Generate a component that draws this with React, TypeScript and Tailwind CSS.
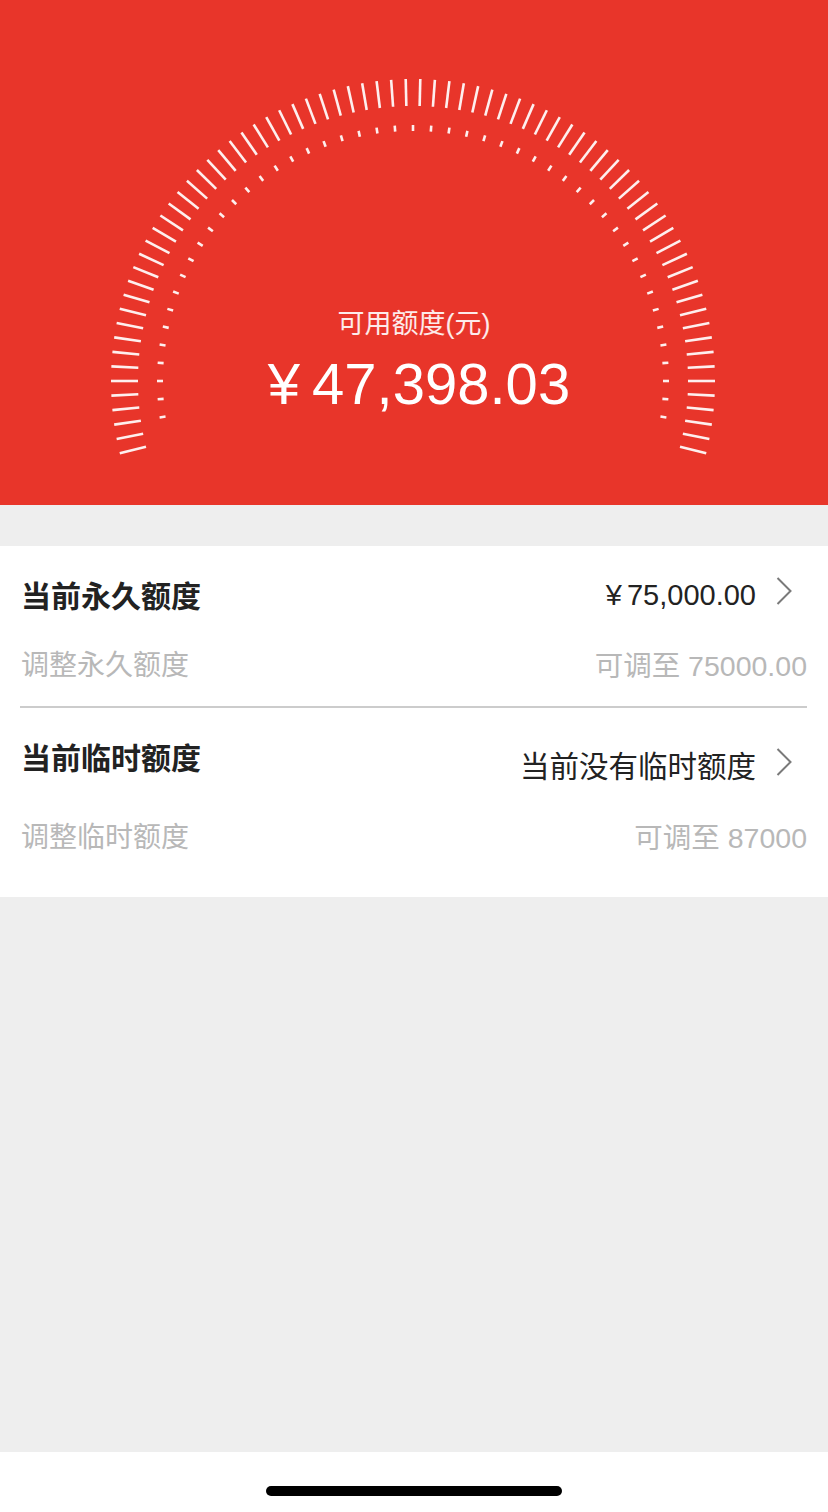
import React from 'react';

const CX = 413;
const CY = 381;

// outer scale: 76 ticks, 65 steps across the top half, 5 more below each side
const ticks = Array.from({ length: 76 }, (_, i) => {
  const step = 180 / 65;
  const a = ((180 + 5 * step - i * step) * Math.PI) / 180;
  return {
    x1: CX + 275 * Math.cos(a),
    y1: CY - 275 * Math.sin(a),
    x2: CX + 302 * Math.cos(a),
    y2: CY - 302 * Math.sin(a),
  };
});

// inner dotted ring
const dots = Array.from({ length: 49 }, (_, i) => {
  const step = 180 / 44;
  const a = ((180 + 2 * step - i * step) * Math.PI) / 180;
  return {
    x1: CX + 250 * Math.cos(a),
    y1: CY - 250 * Math.sin(a),
    x2: CX + 256 * Math.cos(a),
    y2: CY - 256 * Math.sin(a),
  };
});

const Gauge = () => (
  <svg className="absolute inset-0" width={828} height={505} viewBox="0 0 828 505">
    {ticks.map((t, i) => (
      <line key={`t${i}`} {...t} stroke="#ffffff" strokeOpacity={0.92} strokeWidth={2.6} />
    ))}
    {dots.map((d, i) => (
      <line key={`d${i}`} {...d} stroke="#ffffff" strokeOpacity={0.92} strokeWidth={2.6} />
    ))}
  </svg>
);

const Chevron = () => (
  <svg width={16} height={28} viewBox="0 0 16 28" className="mb-[10px] ml-[20px]">
    <polyline points="1.5,1 14.5,14 1.5,27" fill="none" stroke="#7a7a7a" strokeWidth={2} />
  </svg>
);

export default function App() {
  return (
    <div
      className="w-[828px] h-[1512px] bg-[#eeeeee] flex flex-col"
      style={{ fontFamily: '"Liberation Sans", "Noto Sans CJK SC", sans-serif' }}
    >
      {/* Header gauge */}
      <header className="relative h-[505px] bg-[#e8352a] shrink-0">
        <Gauge />
        <div className="relative flex flex-col items-center pt-[306px]">
          <div className="text-[27px] leading-[36px] text-white/90">可用额度(元)</div>
          <div className="mt-[10px] pl-[10px] text-[58px] leading-[64px] text-white">
            <span className="mr-[12px]">¥</span>47,398.03
          </div>
        </div>
      </header>

      {/* Limits card */}
      <section className="mt-[41px] bg-white pl-[21px] pr-[21px] pb-[34px]">
        <div className="pt-[25px]">
          <div className="h-[50px] flex items-center justify-between">
            <span className="text-[30px] font-bold text-[#222222]">当前永久额度</span>
            <div className="flex items-center mr-[15px]">
              <span className="text-[29px] text-[#222222]">
                <span className="mr-[5px]">¥</span>75,000.00
              </span>
              <Chevron />
            </div>
          </div>
          <div className="mt-[20px] h-[50px] flex items-center justify-between text-[28px] text-[#b8b8b8]">
            <span>调整永久额度</span>
            <span className="text-[28.5px]">可调至 75000.00</span>
          </div>
          <div className="mt-[15px] h-[2px] bg-[#cccccc] -ml-[1px]" />
        </div>

        <div className="pt-[25px]">
          <div className="h-[50px] flex items-center justify-between">
            <span className="text-[30px] font-bold text-[#222222]">当前临时额度</span>
            <div className="flex items-center mr-[15px] mt-[18px]">
              <span className="text-[29.5px] text-[#222222]">当前没有临时额度</span>
              <Chevron />
            </div>
          </div>
          <div className="mt-[30px] h-[50px] flex items-center justify-between text-[28px] text-[#b8b8b8]">
            <span>调整临时额度</span>
            <span className="text-[28.5px]">可调至 87000</span>
          </div>
        </div>
      </section>

      <div className="flex-1" />

      {/* Home indicator */}
      <div className="h-[60px] bg-white shrink-0 pt-[34px]">
        <div className="mx-auto w-[296px] h-[10px] rounded-full bg-black" />
      </div>
    </div>
  );
}
